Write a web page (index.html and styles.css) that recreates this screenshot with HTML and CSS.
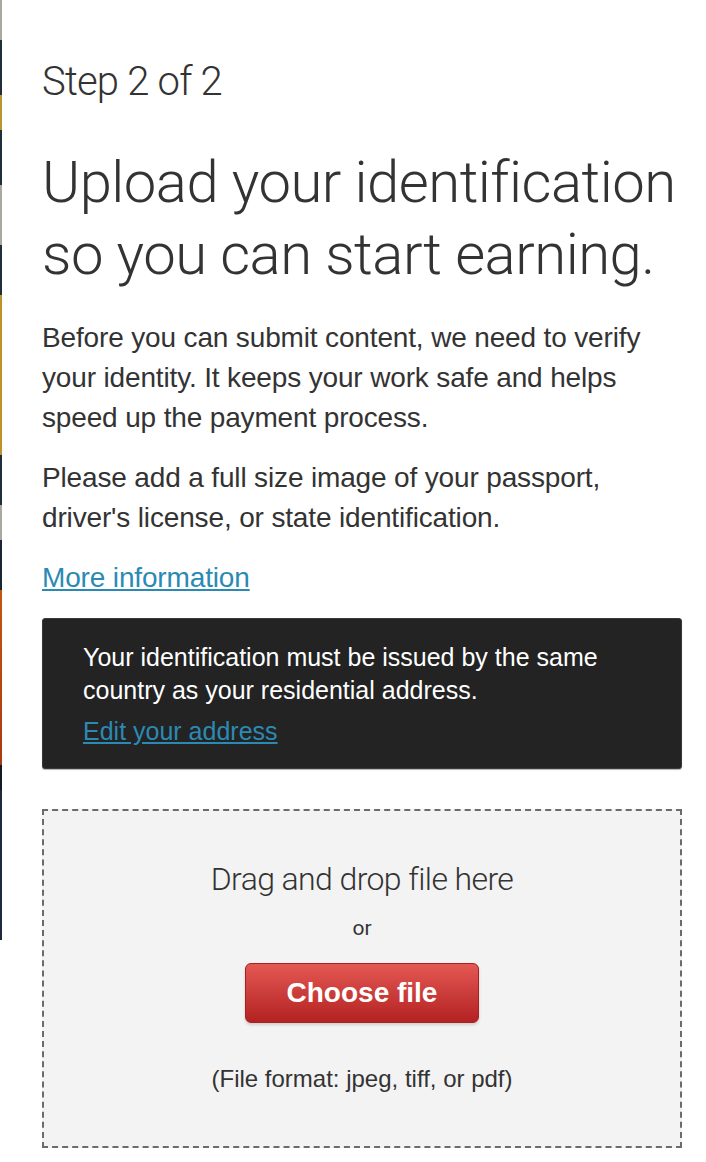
FILE: index.html
```html
<!DOCTYPE html>
<html>
<head>
  <title>Upload your identification</title>
  <link rel="stylesheet" href="styles.css">
</head>
<body>

  <div class="page">
    <div class="backdrop"></div>

    <div class="content">
      <div class="step">Step 2 of 2</div>

      <h1 class="title">Upload your identification so you can start earning.</h1>

      <p class="text">Before you can submit content, we need to verify your identity. It keeps your work safe and helps speed up the payment process.</p>
      <p class="text">Please add a full size image of your passport, driver's license, or state identification.</p>

      <p class="text"><a href="#" class="link">More information</a></p>

      <div class="notice">
        <p class="notice-text">Your identification must be issued by the same country as your residential address.</p>
        <a href="#" class="link notice-link">Edit your address</a>
      </div>

      <div class="dropzone">
        <div class="drop-title">Drag and drop file here</div>
        <div class="drop-or">or</div>
        <button class="choose-button">Choose file</button>
        <div class="drop-format">(File format: jpeg, tiff, or pdf)</div>
      </div>
    </div>
  </div>

</body>
</html>
```

FILE: styles.css
```css
body {
  margin: 0;
  background-color: #fff;
  font-family: 'Liberation Sans', Arial, sans-serif;
  color: #333;
}

.page {
  display: flex;
  align-items: flex-start;
}

/* полоска фоновой картинки слева */
.backdrop {
  flex: 0 0 2px;
  height: 940px;
  background: linear-gradient(to bottom,
    #a9a89c 0, #a9a89c 40px,
    #1f2d3d 40px, #1f2d3d 95px,
    #b8952e 95px, #b8952e 130px,
    #1f2d3d 130px, #1f2d3d 185px,
    #a9a89c 185px, #a9a89c 245px,
    #1f2d3d 245px, #1f2d3d 295px,
    #bf912a 295px, #bf912a 455px,
    #1f2d3d 455px, #1f2d3d 505px,
    #a9a89c 505px, #a9a89c 540px,
    #1a2535 540px, #1a2535 590px,
    #c4560f 590px, #a93a10 765px,
    #141a24 765px, #141a24 790px,
    #1c2a3c 790px, #1c2a3c 940px);
}

.content {
  width: 640px;
  padding: 58px 24px 16px 40px;
}

.step {
  font-family: 'Roboto', sans-serif;
  font-weight: 300;
  font-size: 40px;
  line-height: 48px;
  letter-spacing: -0.8px;
  color: #333;
}

.title {
  margin: 40px 0 28px 0;
  font-family: 'Roboto', sans-serif;
  font-weight: 300;
  font-size: 58px;
  line-height: 72px;
  letter-spacing: -0.5px;
  color: #333;
}

.text {
  margin: 0 0 20px 0;
  font-size: 28px;
  line-height: 40px;
  letter-spacing: -0.15px;
}

.link {
  color: #2b8ab3;
  text-decoration: underline;
}

.notice {
  margin-top: 19px;
  padding: 22px 40px 20px 40px;
  background-color: #232323;
  border: 1px solid #3a3a3a;
  border-radius: 3px;
  box-shadow: 0 1px 1px rgba(0,0,0,0.3);
}

.notice-text {
  margin: 0 0 8px 0;
  color: #fff;
  font-size: 25px;
  line-height: 33px;
}

.notice-link {
  font-size: 25px;
  line-height: 33px;
}

.dropzone {
  margin-top: 40px;
  padding: 48px 20px 53px 20px;
  background-color: #f3f3f3;
  border: 2px dashed #6b6b6b;
  text-align: center;
}

.drop-title {
  font-family: 'Roboto', sans-serif;
  font-weight: 300;
  font-size: 32px;
  line-height: 40px;
  letter-spacing: -0.6px;
  color: #333;
}

.drop-or {
  margin-top: 15px;
  font-family: 'Roboto', sans-serif;
  font-size: 21px;
  line-height: 28px;
  color: #333;
}

.choose-button {
  margin-top: 21px;
  width: 234px;
  height: 60px;
  border: 1px solid #a82020;
  border-radius: 6px;
  background: linear-gradient(to bottom, #e45853, #b22222);
  color: #fff;
  font-family: 'Liberation Sans', Arial, sans-serif;
  font-weight: bold;
  font-size: 28px;
  cursor: pointer;
  box-shadow: 0 2px 3px rgba(0,0,0,0.15);
}

.drop-format {
  margin-top: 42px;
  font-size: 24px;
  line-height: 28px;
  color: #333;
}
```
